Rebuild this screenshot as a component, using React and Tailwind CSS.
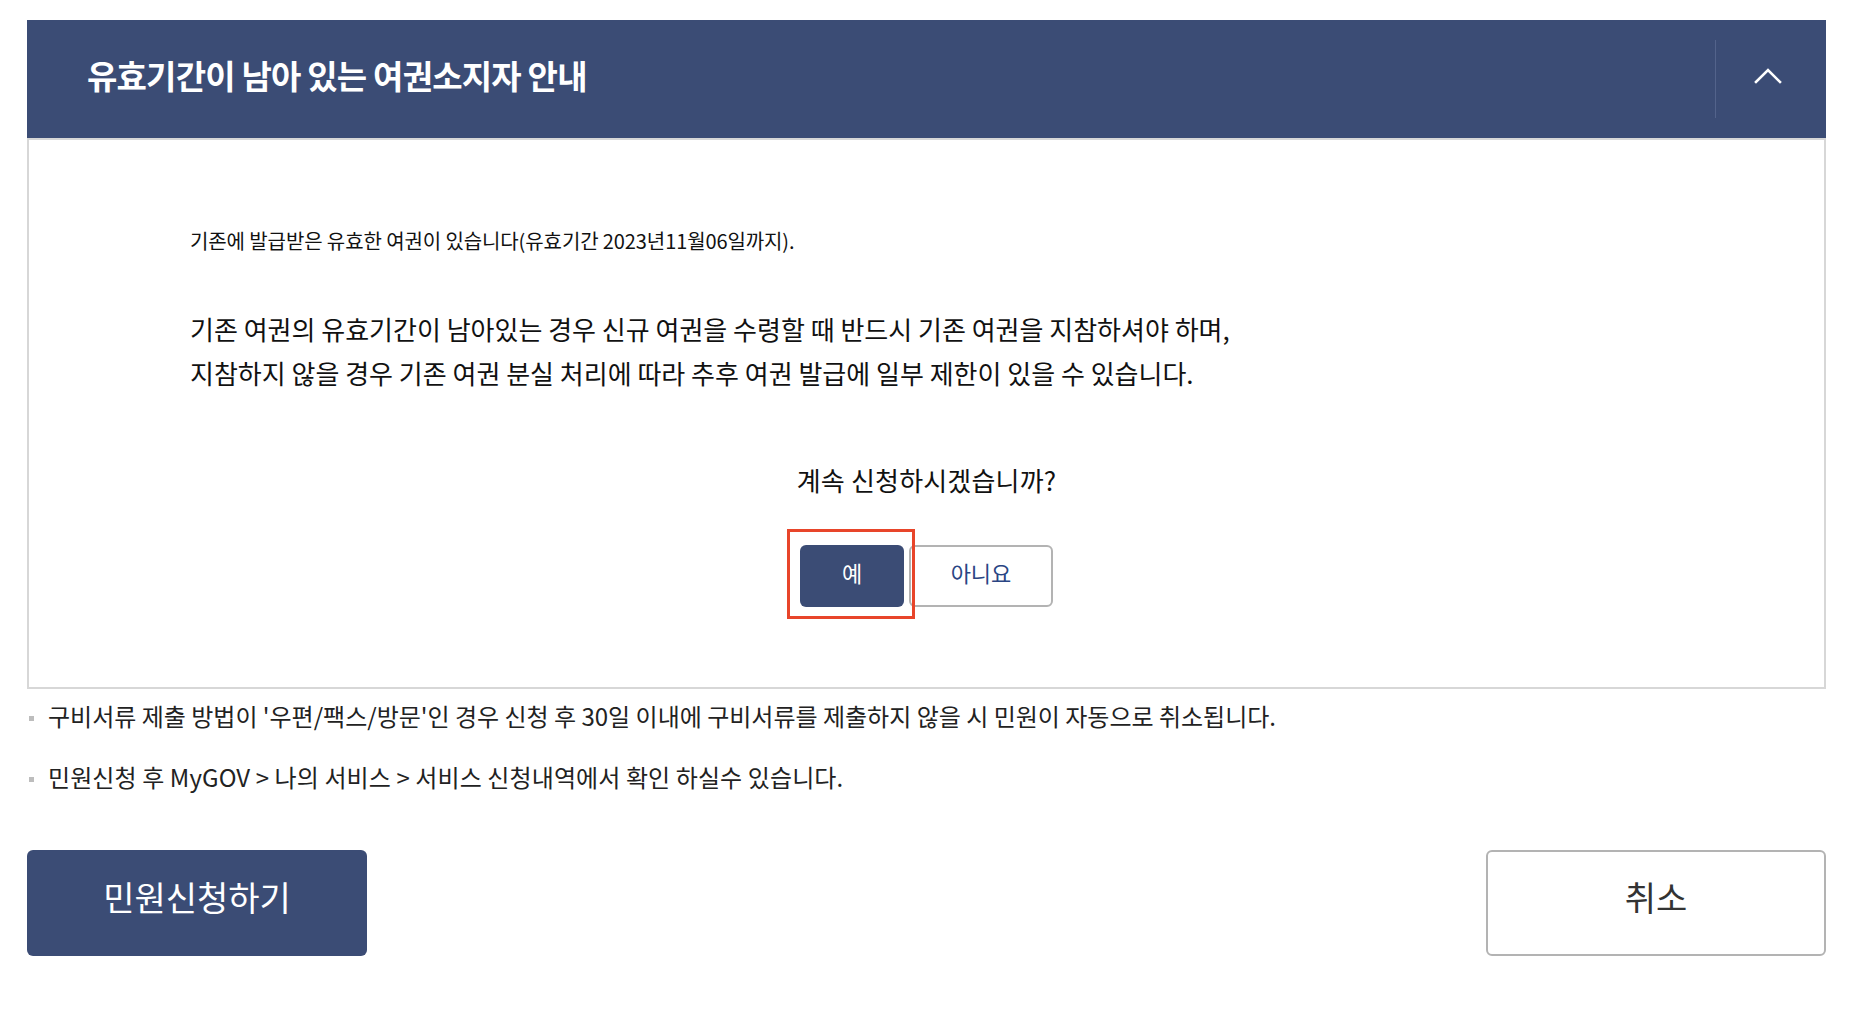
import React from "react";

export default function App() {
  return (
    <div className="min-h-screen bg-white font-['Noto_Sans_CJK_KR','Noto_Sans',sans-serif] text-[#111]">
      <div className="ml-[27px] w-[1799px] pt-[20px]">
        {/* Header */}
        <div className="flex h-[118px] items-stretch bg-[#3b4c75]">
          <h2 className="flex flex-1 items-center pb-[8px] pl-[60px] text-[33px] font-bold leading-none tracking-[-0.8px] text-white">
            유효기간이 남아 있는 여권소지자 안내
          </h2>
          <div className="my-[20px] w-px bg-[#53638b]" />
          <button className="flex w-[110px] items-center justify-center pb-[8px] pr-[6px]">
            <svg width="28" height="17" viewBox="0 0 28 17" fill="none">
              <polyline points="2,15 14,3 26,15" stroke="white" strokeWidth="2.6" strokeLinecap="square" />
            </svg>
          </button>
        </div>

        {/* Body */}
        <div className="border-2 border-[#d7d7d7] pl-[161px] pt-[87px] pb-[80px]">
          <p className="text-[20px] leading-[28px] tracking-[-0.1px] text-[#111]">
            기존에 발급받은 유효한 여권이 있습니다(유효기간 2023년11월06일까지).
          </p>
          <p className="mt-[52px] text-[26px] leading-[44px] text-[#111]">
            기존 여권의 유효기간이 남아있는 경우 신규 여권을 수령할 때 반드시 기존 여권을 지참하셔야 하며,
            <br />
            지참하지 않을 경우 기존 여권 분실 처리에 따라 추후 여권 발급에 일부 제한이 있을 수 있습니다.
          </p>
          <div className="-ml-[161px] mt-[68px] flex flex-col items-center">
            <p className="text-[26px] leading-[34px] tracking-[0.2px] text-[#111]">계속 신청하시겠습니까?</p>
            <div className="mt-[48px] flex gap-[5px]">
              <div className="relative">
                <button className="flex h-[62px] w-[104px] items-center justify-center rounded-[6px] bg-[#3b4c75] pb-[8px] text-[22px] text-white">
                  예
                </button>
                <div className="pointer-events-none absolute -left-[13px] -top-[16px] h-[90px] w-[128px] border-[3px] border-[#e8452a]" />
              </div>
              <button className="flex h-[62px] w-[144px] items-center justify-center rounded-[6px] border-2 border-[#b3b3b3] bg-white pb-[8px] text-[22px] text-[#2a4583]">
                아니요
              </button>
            </div>
          </div>
        </div>

        {/* Notes */}
        <ul className="mt-[12px]">
          <li className="flex items-center gap-[14px] pl-[2px] text-[24px] leading-[30px] text-[#222]">
            <span className="mt-[4px] h-[5px] w-[5px] shrink-0 bg-[#bdbdbd]" />
            구비서류 제출 방법이 '우편/팩스/방문'인 경우 신청 후 30일 이내에 구비서류를 제출하지 않을 시 민원이 자동으로 취소됩니다.
          </li>
          <li className="mt-[31px] flex items-center gap-[14px] pl-[2px] text-[24px] leading-[30px] tracking-[0.1px] text-[#222]">
            <span className="mt-[4px] h-[5px] w-[5px] shrink-0 bg-[#bdbdbd]" />
            민원신청 후 MyGOV &gt; 나의 서비스 &gt; 서비스 신청내역에서 확인 하실수 있습니다.
          </li>
        </ul>

        {/* Bottom buttons */}
        <div className="mt-[58px] flex justify-between">
          <button className="flex h-[106px] w-[340px] items-center justify-center rounded-[6px] bg-[#3b4c75] pb-[14px] text-[34px] text-white">
            민원신청하기
          </button>
          <button className="flex h-[106px] w-[340px] items-center justify-center rounded-[6px] border-2 border-[#b3b3b3] bg-white pb-[14px] text-[34px] text-[#333]">
            취소
          </button>
        </div>
      </div>
    </div>
  );
}
